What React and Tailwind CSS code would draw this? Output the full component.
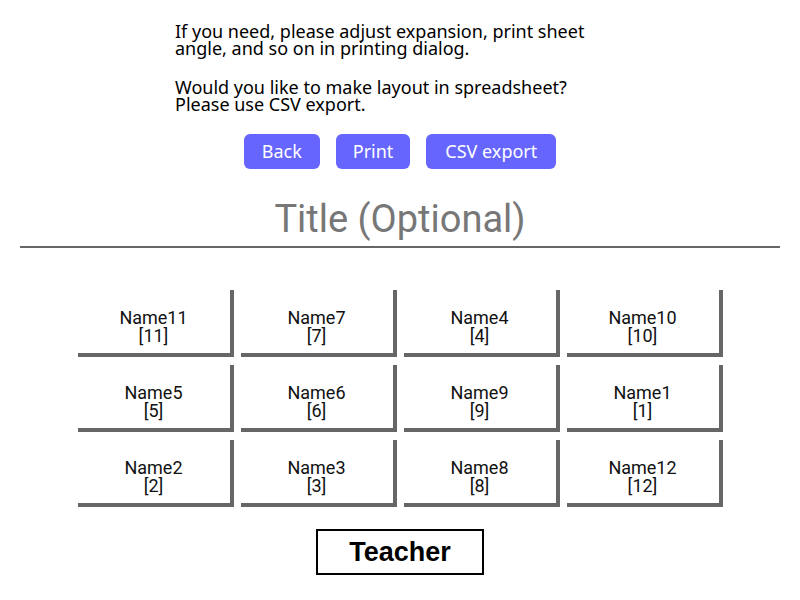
import React from "react";

const seats = [
  ["Name11", 11], ["Name7", 7], ["Name4", 4], ["Name10", 10],
  ["Name5", 5], ["Name6", 6], ["Name9", 9], ["Name1", 1],
  ["Name2", 2], ["Name3", 3], ["Name8", 8], ["Name12", 12],
];

export default function App() {
  return (
    <div className="w-full min-h-[600px] bg-white text-black">
      <div
        className="ml-[175px] max-w-[430px] pt-[23px] text-[18px] leading-[17px]"
        style={{ fontFamily: '"Noto Sans", sans-serif' }}
      >
        <p>If you need, please adjust expansion, print sheet angle, and so on in printing dialog.</p>
        <p className="mt-[22px]">Would you like to make layout in spreadsheet? Please use CSV export.</p>
      </div>

      <div
        className="flex justify-center gap-4 mt-[21px]"
        style={{ fontFamily: '"Noto Sans", sans-serif' }}
      >
        <button className="h-[35px] px-[18px] rounded-[6px] bg-[#6666ff] text-white text-[18px]">Back</button>
        <button className="h-[35px] px-[17px] rounded-[6px] bg-[#6666ff] text-white text-[18px]">Print</button>
        <button className="h-[35px] px-[19px] rounded-[6px] bg-[#6666ff] text-white text-[18px]">CSV export</button>
      </div>

      <div
        className="mx-[20px] mt-[21px] h-[58px] pt-[10px] border-b-2 border-[#666] text-center text-[38px] leading-[38px] text-[#777]"
        style={{ fontFamily: "Roboto, sans-serif" }}
      >
        Title (Optional)
      </div>

      <div
        className="mt-[42px] mx-auto w-fit grid grid-cols-[repeat(4,156px)] auto-rows-[67px] gap-x-[7px] gap-y-[8px]"
        style={{ fontFamily: "Roboto, sans-serif" }}
      >
        {seats.map(([name, num]) => (
          <div
            key={num}
            className="border-r-4 border-b-4 border-[#666] pt-[19px] text-center text-[18px] leading-[18px] text-[#111]"
          >
            <div>{name}</div>
            <div>[{num}]</div>
          </div>
        ))}
      </div>

      <div className="flex justify-center mt-[22px]">
        <div
          className="w-[168px] h-[46px] border-2 border-black flex items-center justify-center font-bold text-[27px]"
          style={{ fontFamily: '"Liberation Sans", Arial, sans-serif' }}
        >
          Teacher
        </div>
      </div>
    </div>
  );
}
